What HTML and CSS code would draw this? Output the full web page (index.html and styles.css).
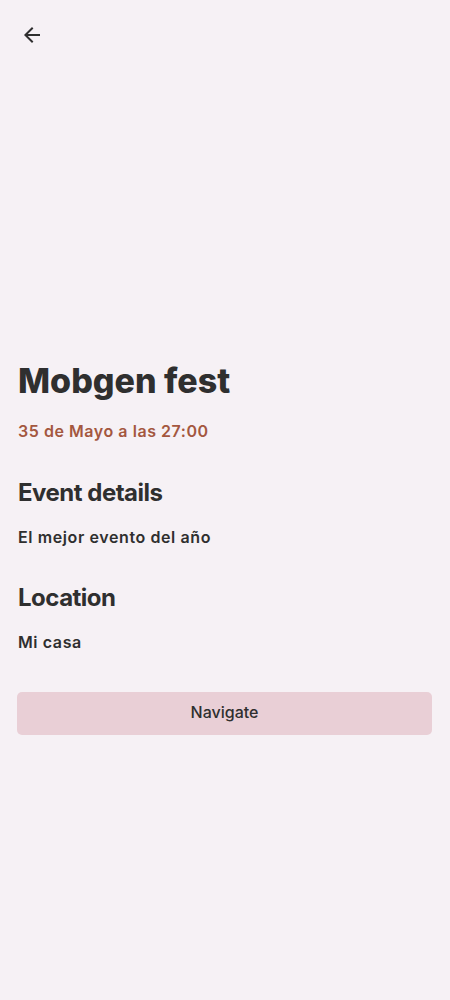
FILE: index.html
```html
<!DOCTYPE html>
<html lang="es">
<head>
<meta charset="utf-8">
<title>Mobgen fest</title>
<link rel="stylesheet" href="styles.css">
</head>
<body>
<div class="screen">
  <header class="topbar">
    <button class="back" aria-label="Back">
      <svg viewBox="0 0 24 24" width="24" height="24"><path d="M20 11H7.83l5.59-5.59L12 4l-8 8 8 8 1.41-1.41L7.83 13H20v-2z" fill="#2f2f2f"/></svg>
    </button>
  </header>
  <main class="content">
    <h1 class="title">Mobgen fest</h1>
    <p class="date">35 de Mayo a las 27:00</p>
    <h2 class="section">Event details</h2>
    <p class="body">El mejor evento del año</p>
    <h2 class="section">Location</h2>
    <p class="body">Mi casa</p>
    <button class="navigate">Navigate</button>
  </main>
</div>
</body>
</html>
```

FILE: styles.css
```css
html, body {
  margin: 0;
  padding: 0;
  background: #f6f1f5;
}
body {
  font-family: Inter, "Noto Sans", sans-serif;
  color: #2f2f2f;
}
.screen {
  width: 450px;
  min-height: 1000px;
}
.topbar {
  padding: 23px 0 0 20px;
  height: 24px;
}
.back {
  display: block;
  width: 24px;
  height: 24px;
  padding: 0;
  border: 0;
  background: none;
}
.back svg { display: block; }
.content {
  margin-top: 314px;
  padding: 0 18px 0 17px;
  display: flex;
  flex-direction: column;
}
.title {
  margin: 0 0 0 1px;
  font-size: 34px;
  line-height: 40px;
  font-weight: 800;
  letter-spacing: 0;
}
.date {
  margin: 18px 0 0 1px;
  font-size: 16px;
  line-height: 24px;
  font-weight: 600;
  color: #a4573f;
  letter-spacing: 0.55px;
}
.section {
  margin: 34px 0 0 1px;
  font-size: 24px;
  line-height: 32px;
  font-weight: 700;
  letter-spacing: -0.5px;
}
.body {
  margin: 16px 0 0 1px;
  font-size: 16px;
  line-height: 24px;
  font-weight: 600;
  letter-spacing: 0.6px;
}
.body + .section { margin-top: 33px; }
.navigate {
  margin-top: 38px;
  height: 43px;
  padding: 0 0 3px;
  border: 0;
  border-radius: 5px;
  background: #e9cfd6;
  color: #2f2f2f;
  font-family: Inter, "Noto Sans", sans-serif;
  font-size: 16px;
  font-weight: 500;
  letter-spacing: 0;
}
```
